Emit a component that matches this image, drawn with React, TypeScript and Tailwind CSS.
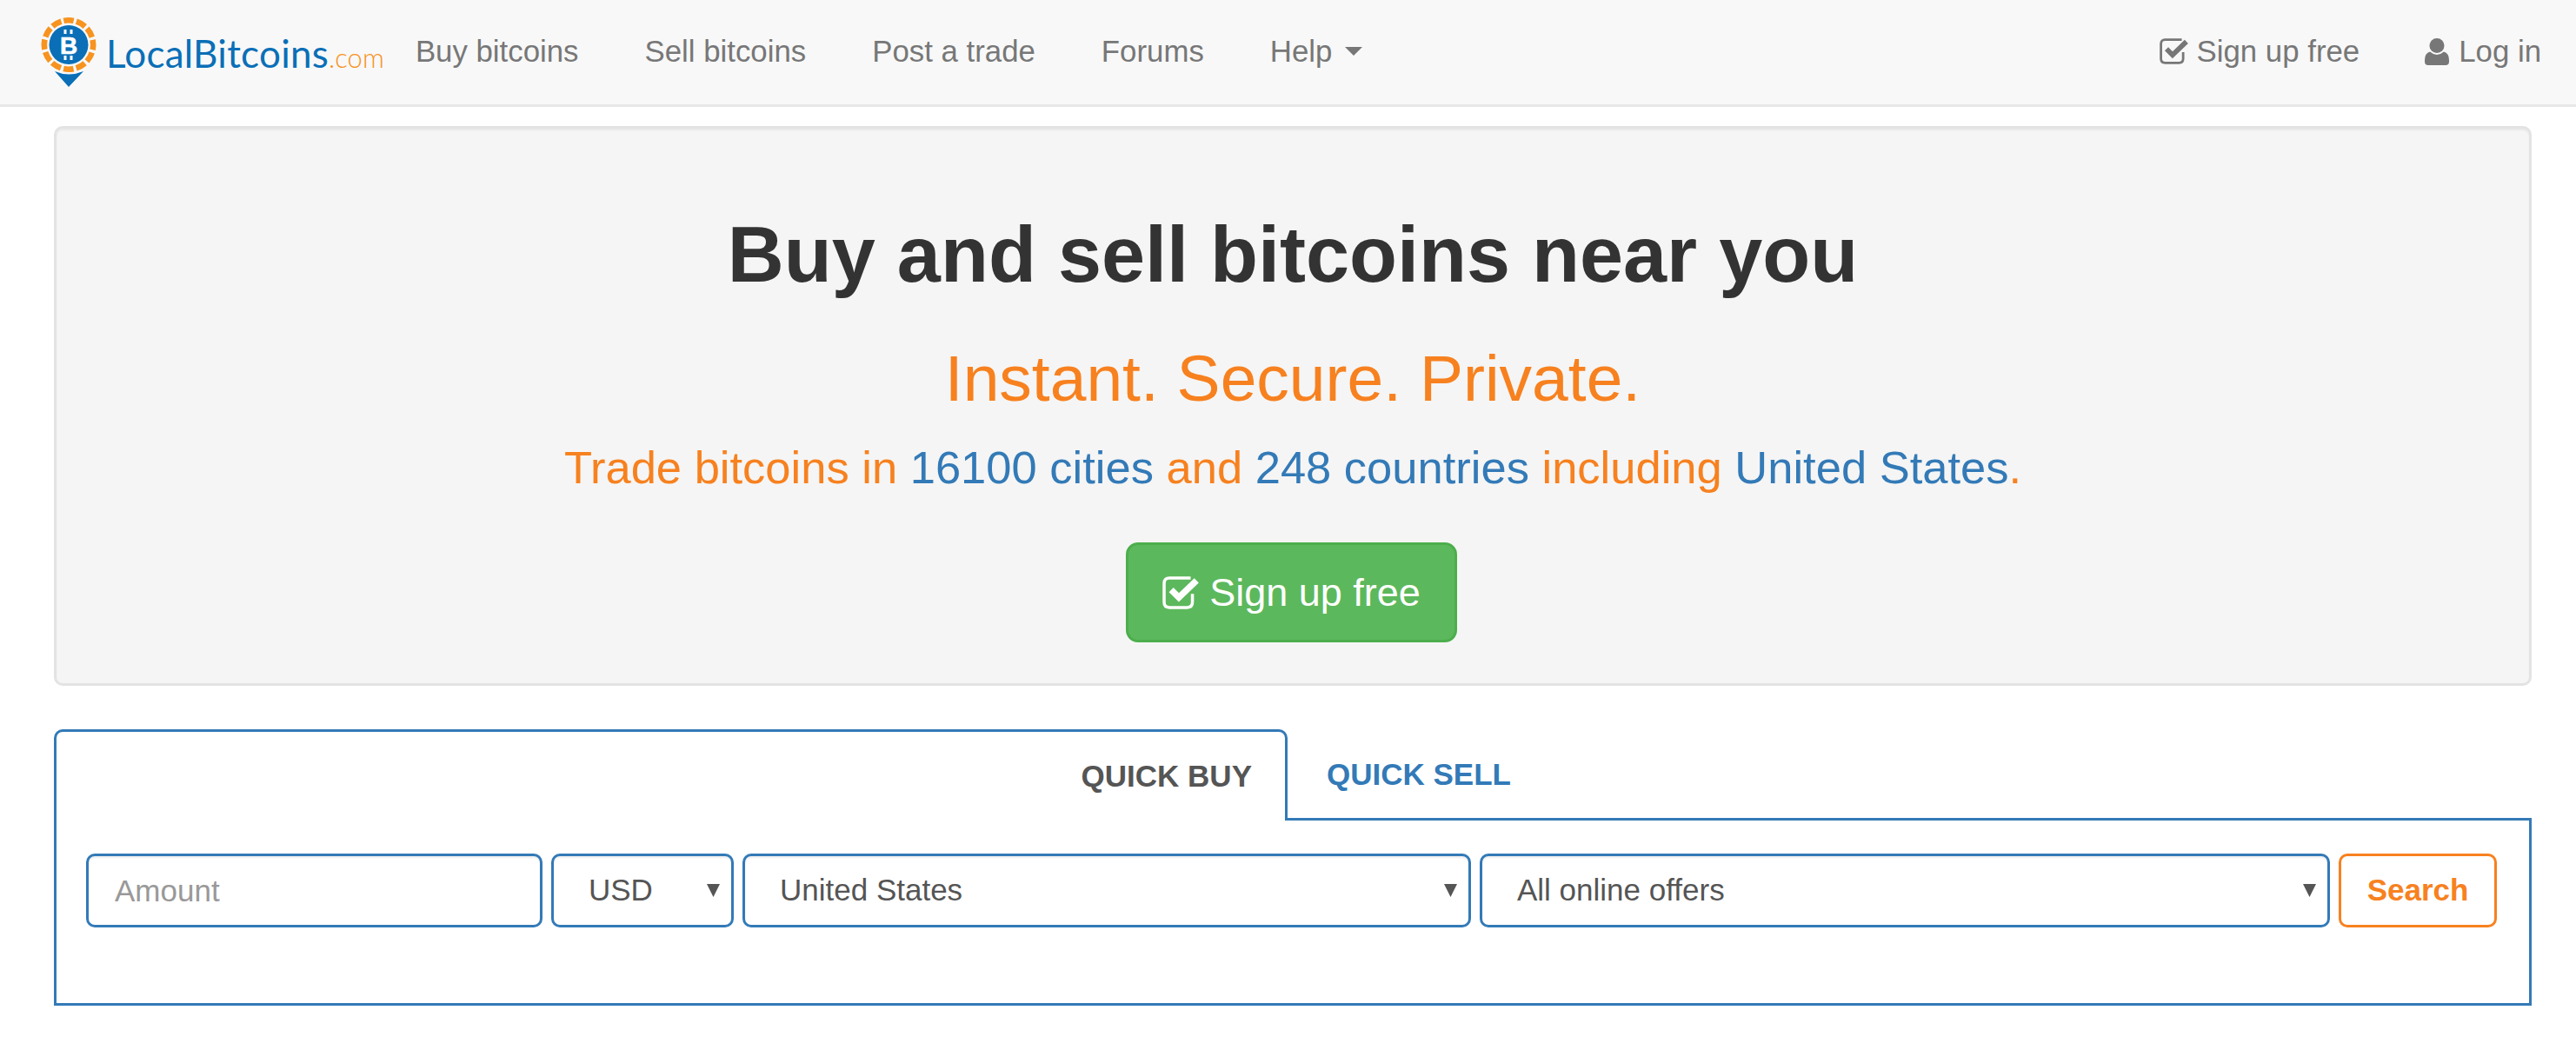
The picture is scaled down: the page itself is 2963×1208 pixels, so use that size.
import type { ReactNode } from "react";

const ARIAL = "font-['Liberation_Sans',Arial,sans-serif]";
const NAV_LINKS = ["Buy bitcoins", "Sell bitcoins", "Post a trade", "Forums"];

function CheckSquare({ className }: { className?: string }) {
  return (
    <svg viewBox="0 0 31 28" className={className} fill="none" stroke="currentColor">
      <path d="M24 1.5 H6 Q1.5 1.5 1.5 6 V22 Q1.5 26.5 6 26.5 H21 Q25.5 26.5 25.5 22 V15" strokeWidth="2.6" />
      <path d="M7.5 11.5 L14 18 L29 3.5" strokeWidth="5.4" />
    </svg>
  );
}

function UserIcon({ className }: { className?: string }) {
  return (
    <svg viewBox="0 0 28 31" className={className} fill="currentColor">
      <circle cx="14" cy="8.5" r="8.5" />
      <path d="M6 15.5 Q10 19 14 19 Q18 19 22 15.5 Q28 17 28 25 V27 Q28 31 24 31 H4 Q0 31 0 27 V25 Q0 17 6 15.5 Z" />
    </svg>
  );
}

function Logo() {
  return (
    <div className="flex items-center">
      <svg viewBox="0 0 70 85" className="w-[70px] h-[85px] shrink-0">
        <circle cx="35" cy="33.5" r="28.2" fill="none" stroke="#f7931e" strokeWidth="6.6" strokeDasharray="11.5 3.27" transform="rotate(-101.7 35 33.5)" />
        <circle cx="35" cy="33.5" r="22.5" fill="#0a6fb7" />
        <text x="35" y="43.5" textAnchor="middle" fontFamily="'Liberation Sans', sans-serif" fontWeight="700" fontSize="28" fill="#fff" stroke="#fff" strokeWidth="0.6">B</text>
        <path d="M31 16 V21 M38 16 V21 M31 46 V51 M38 46 V51" stroke="#fff" strokeWidth="3" />
        <path d="M19 64 Q35 71 52 64 L35 82 Z" fill="#0a6fb7" />
      </svg>
      <div className="ml-2 flex items-baseline font-['Lato',sans-serif] text-[#0a6fb7] text-[44px] leading-none tracking-[0.25px] pt-[2px]">
        LocalBitcoins
        <span className="text-[#f7931e] text-[31px] font-light tracking-normal">.com</span>
      </div>
    </div>
  );
}

function SelectBox({ width, pad, children }: { width: string; pad: string; children: ReactNode }) {
  return (
    <div className={`relative ${width}`}>
      <select className={`w-full h-full appearance-none bg-white border-[3px] border-[#337ab7] rounded-[10px] text-[35px] text-[#555] shadow-[inset_0_2px_2px_rgba(0,0,0,0.075)] ${pad}`}>
        <option>{children}</option>
      </select>
      <svg viewBox="0 0 15 15" className="absolute right-[16px] top-[35px] w-[15px] h-[15px] text-[#555]" fill="currentColor">
        <path d="M0 0 H15 L7.5 15 Z" />
      </svg>
    </div>
  );
}

export default function App() {
  return (
    <div className={`min-h-[1208px] bg-white ${ARIAL}`}>
      <nav className="h-[123px] bg-[#f8f8f8] border-b-[3px] border-[#e7e7e7] flex items-center pl-[44px] pr-[40px] text-[34.8px] text-[#777]">
        <Logo />
        <ul className="flex items-center ml-[36px] gap-[76px] pb-[2px]">
          {NAV_LINKS.map((l) => (
            <li key={l}>{l}</li>
          ))}
          <li className="flex items-center">
            Help
            <svg viewBox="0 0 20 10" className="w-[20px] h-[10px] ml-[15px]" fill="currentColor">
              <path d="M0 0 H20 L10 10 Z" />
            </svg>
          </li>
        </ul>
        <div className="ml-auto flex items-center pb-[2px]">
          <CheckSquare className="w-[33px] h-[30px] mr-[10px]" />
          <span>Sign up free</span>
          <UserIcon className="w-[28px] h-[31px] ml-[75px] mr-[11px]" />
          <span>Log in</span>
        </div>
      </nav>

      <main className="ml-[62px] w-[2850px]">
        <section className="mt-[22px] h-[644px] bg-[#f5f5f5] border-[3px] border-[#e3e3e3] rounded-[10px] flex flex-col items-center shadow-[inset_0_2px_2px_rgba(0,0,0,0.05)]">
          <h1 className="mt-[90px] text-[90px] leading-[110px] font-bold text-[#333]">Buy and sell bitcoins near you</h1>
          <h2 className="mt-[47px] text-[75px] leading-[80px] text-[#f7811f]">Instant. Secure. Private.</h2>
          <p className="mt-[31px] text-[52.5px] leading-[64px] text-[#f7811f]">
            Trade bitcoins in <span className="text-[#337ab7]">16100 cities</span> and{" "}
            <span className="text-[#337ab7]">248 countries</span> including{" "}
            <span className="text-[#337ab7]">United States</span>.
          </p>
          <button className="mt-[54px] mr-[3px] w-[381px] h-[115px] bg-[#5cb85c] border-[3px] border-[#4cae4c] rounded-[14px] text-white text-[45px] flex items-center justify-center">
            <CheckSquare className="w-[42px] h-[38px] mr-[12px]" />
            Sign up free
          </button>
        </section>

        <section className="mt-[50px]">
          <div className="flex h-[102px]">
            <div className="relative z-10 w-[1419px] h-[105px] bg-white border-[3px] border-b-0 border-[#337ab7] rounded-t-[10px] pr-[38px] flex items-center justify-end text-[35px] font-bold text-[#555]">
              QUICK BUY
            </div>
            <div className="h-[105px] pl-[45px] flex items-center text-[35px] font-bold text-[#337ab7]">QUICK SELL</div>
          </div>
          <div className="border-[3px] border-[#337ab7] pl-[34px] pt-[38px] pb-[87px] flex gap-[10px]">
            <input
              placeholder="Amount"
              className="w-[525px] h-[85px] border-[3px] border-[#337ab7] rounded-[10px] px-[30px] text-[35px] text-[#555] placeholder:text-[#999] shadow-[inset_0_2px_2px_rgba(0,0,0,0.075)]"
            />
            <SelectBox width="w-[210px]" pad="pl-[40px]">USD</SelectBox>
            <SelectBox width="w-[838px]" pad="pl-[40px]">United States</SelectBox>
            <SelectBox width="w-[978px]" pad="pl-[40px]">All online offers</SelectBox>
            <button className="w-[182px] h-[85px] border-[3px] border-[#f7811f] rounded-[10px] text-[35px] font-bold text-[#f7811f] bg-white">
              Search
            </button>
          </div>
        </section>
      </main>
    </div>
  );
}
